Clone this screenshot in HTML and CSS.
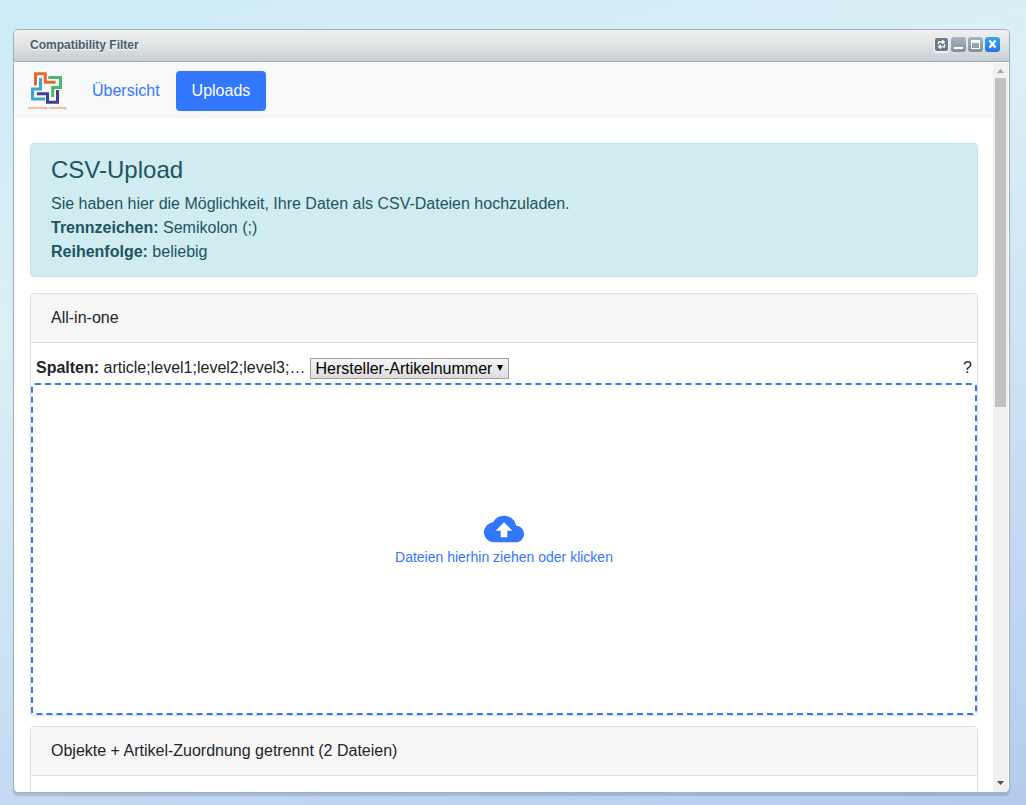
FILE: index.html
```html
<!DOCTYPE html>
<html lang="de">
<head>
<meta charset="utf-8">
<title>Compatibility Filter</title>
<link rel="stylesheet" href="styles.css">
</head>
<body>
<div class="window">
  <header class="titlebar">
    <span class="title">Compatibility Filter</span>
    <div class="tools">
      <button class="tool tool-sync" aria-label="Aktualisieren"><svg width="13" height="13" viewBox="0 0 13 13" fill="none" stroke="#fff" stroke-width="1.3"><path d="M3.500 6.500V4H7.500M9.500 6V8.800H5.500"/><path d="M7 1.500L10.500 4L7 6.500ZM6 6.300L2.500 8.800L6 11.300Z" fill="#fff" stroke="none"/></svg></button>
      <button class="tool" aria-label="Minimieren"><svg width="15" height="15" viewBox="0 0 15 15"><path d="M3 10h9v2H3z" fill="#fff"/></svg></button>
      <button class="tool" aria-label="Maximieren"><svg width="15" height="15" viewBox="0 0 15 15"><path fill-rule="evenodd" d="M3 3h9v9H3zM4 6v5h7V6z" fill="#fff"/></svg></button>
      <button class="tool tool-close" aria-label="Schließen"><svg width="15" height="15" viewBox="0 0 15 15"><path d="M4.500 3.500L10.500 10.500M10.500 3.500L4.500 10.500" stroke="#fff" stroke-width="2.400"/></svg></button>
    </div>
  </header>
  <div class="viewport">
    <div class="page">
      <nav class="navbar">
        <svg class="logo" width="40" height="40" viewBox="0 0 40 40" fill="none" stroke-width="3">
          <path d="M8.500 14.500V2.700H18.300V11.300H28.600" stroke="#ec662b"/>
          <path d="M21.300 6.500H33.500V16.500H25.700V26" stroke="#4ab96c"/>
          <path d="M13.500 7V18H5.500V28H18" stroke="#36a9cf"/>
          <path d="M10 22.700H20.500V31.300H30.500V19" stroke="#413d99"/>
          <text x="1" y="38" class="logo-text">onlineshop consulting</text>
        </svg>
        <a class="nav-link" href="#">Übersicht</a>
        <a class="nav-link active" href="#">Uploads</a>
      </nav>
      <main class="content">
        <section class="alert">
          <h4 class="alert-title">CSV-Upload</h4>
          <div>Sie haben hier die Möglichkeit, Ihre Daten als CSV-Dateien hochzuladen.</div>
          <div><b>Trennzeichen:</b> Semikolon (;)</div>
          <div><b>Reihenfolge:</b> beliebig</div>
        </section>
        <section class="card">
          <div class="card-header">All-in-one</div>
          <div class="columns">
            <label for="key"><b>Spalten:</b> article;level1;level2;level3;…</label>
            <span class="select-wrap"><select id="key" class="select"><option>Hersteller-Artikelnummer</option></select><svg class="arrow" width="6" height="6" viewBox="0 0 6 6"><path d="M0 0H6L3 6Z"/></svg></span>
            <span class="help">?</span>
          </div>
          <button class="dropzone">
            <svg width="40" height="40" viewBox="0 0 24 24" fill="#3377ff"><path d="M19.350 10.040C18.670 6.590 15.640 4 12 4 9.110 4 6.600 5.640 5.350 8.040 2.340 8.360 0 10.910 0 14c0 3.310 2.690 6 6 6h13c2.760 0 5-2.240 5-5 0-2.640-2.050-4.780-4.650-4.960zM14 13v4h-4v-4H7l5-5 5 5h-3z"/></svg>
            <span>Dateien hierhin ziehen oder klicken</span>
          </button>
        </section>
        <section class="card">
          <div class="card-header">Objekte + Artikel-Zuordnung getrennt (2 Dateien)</div>
          <div class="card-rest"></div>
        </section>
      </main>
    </div>
    <div class="scrollbar" aria-hidden="true">
      <svg width="15" height="15" viewBox="0 0 15 15"><path d="M4 10H11L7.500 6Z" fill="#a3a3a3"/></svg>
      <div class="track"><div class="thumb"></div></div>
      <svg width="15" height="15" viewBox="0 0 15 15"><path d="M4 4H11L7.500 8Z" fill="#505050"/></svg>
    </div>
  </div>
</div>
</body>
</html>
```
FILE: styles.css
```css
* { box-sizing: border-box; }
body {
  margin: 0;
  height: 100vh;
  padding: 29px 16px 12px 13px;
  background: linear-gradient(165deg, #cdebf6 0%, #dceff5 32%, #c9dff3 65%, #b4cbee 100%);
  font: 16px/24px "Liberation Sans", Arial, sans-serif;
  color: #212529;
  overflow: hidden;
}
button { font: inherit; border: 0; padding: 0; cursor: pointer; }
.window {
  height: 100%;
  display: flex;
  flex-direction: column;
  border: 1px solid #a0afbd;
  border-radius: 5px;
  overflow: hidden;
  background: #fff;
  box-shadow: 0 3px 1px rgba(100, 120, 150, .3);
}
.titlebar {
  flex: none;
  height: 32px;
  display: flex;
  align-items: center;
  justify-content: space-between;
  padding: 0 9px 2px 16px;
  border-bottom: 1px solid #a0afbd;
  background: linear-gradient(#f0f0f0, #e0e3e4 50%, #c6ced3);
}
.title { font-size: 12px; font-weight: bold; color: #475c6a; text-shadow: 0 1px 0 #fff; }
.tools { display: flex; gap: 2px; align-items: center; }
.tool { width: 15px; height: 15px; display: flex; border-radius: 3px; background: linear-gradient(#a6b4c0, #8092a0); }
.tool-sync { width: 13px; height: 13px; margin-right: 1px; border-radius: 2px; background: #66788a; box-shadow: 0 1px 0 1px #f4f4f4; }
.tool-close { background: linear-gradient(#36a5f5, #2476dc); }
.viewport { flex: 1; min-height: 0; display: flex; padding: 1px 1px 0 0; }
.page { flex: 1; min-width: 0; overflow: hidden; }
.navbar { display: flex; align-items: center; padding: 8px 13px; background: #f8f9fb; }
.logo { margin-right: 9px; overflow: visible; }
.logo-text { font-size: 4px; fill: #ec662b; stroke: none; }
.nav-link { padding: 8px 16px; border-radius: 4px; color: #3377ff; text-decoration: none; }
.nav-link.active { background: #3377ff; color: #fff; }
.content { padding: 24px 15px 0 16px; }
.alert { padding: 12px 20px; margin-bottom: 16px; border: 1px solid #bee5eb; border-radius: 4px; background: #d1ecf1; color: #1b5561; }
.alert-title { margin: 0 0 8px; font-size: 24px; line-height: 28px; font-weight: normal; }
.card { margin-bottom: 10px; border: 1px solid #dfdfdf; border-radius: 4px; background: #fff; }
.card-header { padding: 12px 20px; border-bottom: 1px solid #dfdfdf; background: #f7f7f7; border-radius: 3px 3px 0 0; }
.columns { display: flex; align-items: center; gap: 5px; padding: 13px 5px 3px; }
.select-wrap { position: relative; display: flex; }
.select { appearance: none; height: 21px; padding: 0 16px 0 4px; border: 1px solid #a0a0a0; border-radius: 0; background: linear-gradient(#f6f6f6, #dddddd); color: #000; font: inherit; line-height: 19px; }
.arrow { position: absolute; right: 6px; top: 7px; pointer-events: none; }
.help { margin-left: auto; }
.dropzone {
  width: 100%;
  height: 332px;
  padding-bottom: 24px;
  display: flex;
  flex-direction: column;
  align-items: center;
  justify-content: center;
  border: 2px dashed #3377ff;
  border-radius: 4px;
  background: #fff;
  color: #3377ff;
  font-size: 14px;
  line-height: 16px;
}
.card-rest { height: 120px; }
.scrollbar { flex: none; width: 15px; display: flex; flex-direction: column; background: #f0f0f0; }
.track { flex: 1; padding: 0 2px; }
.thumb { height: 47%; background: #c1c1c1; }
```
